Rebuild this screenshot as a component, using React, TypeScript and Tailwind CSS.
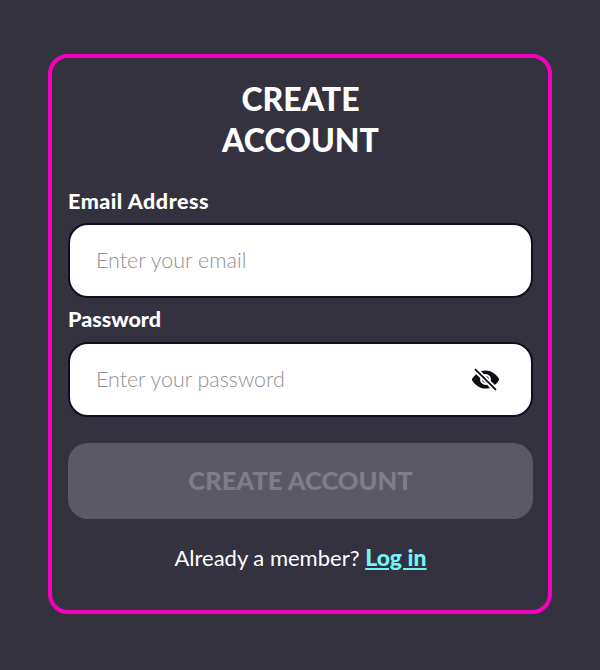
import { IoEyeOff } from "react-icons/io5";

export default function App() {
  return (
    <div className="min-h-[670px] w-full bg-[#353240] pt-[54px] font-['Lato',sans-serif]">
      <div className="mx-[48px] flex h-[560px] w-[504px] flex-col rounded-[20px] border-4 border-[#f700bd] pt-[20px] pr-[15px] pl-4">
        <h1 className="mx-auto w-[200px] text-center text-[32px] leading-[41px] font-black text-white">
          CREATE ACCOUNT
        </h1>
        <label className="mt-[27px] text-[21.5px] leading-[28px] font-black tracking-[0.5px] text-white">Email Address</label>
        <div className="mt-[8px] flex h-[75px] items-center rounded-[20px] border-2 border-[#100e24] bg-white pl-[26px]">
          <span className="text-[21.5px] font-light text-[#909090]">Enter your email</span>
        </div>
        <label className="mt-[7px] text-[21.5px] leading-[28px] font-black text-white">Password</label>
        <div className="mt-[9px] flex h-[75px] items-center justify-between rounded-[20px] border-2 border-[#100e24] bg-white pr-[31px] pl-[26px]">
          <span className="pb-px text-[21.4px] font-light text-[#909090]">Enter your password</span>
          <IoEyeOff className="h-[29px] w-[29px] text-[#0d0d14]" />
        </div>
        <button className="mt-[26px] h-[76px] rounded-[20px] bg-[#5b5966] pb-[2px] text-[25.5px] font-black text-[#7f7d88]">
          CREATE ACCOUNT
        </button>
        <p className="mt-[23px] text-center text-[22px] leading-[30px] text-white">
          Already a member?{" "}
          <a className="text-[23px] font-black text-[#6ff5f5] underline">Log in</a>
        </p>
      </div>
    </div>
  );
}
